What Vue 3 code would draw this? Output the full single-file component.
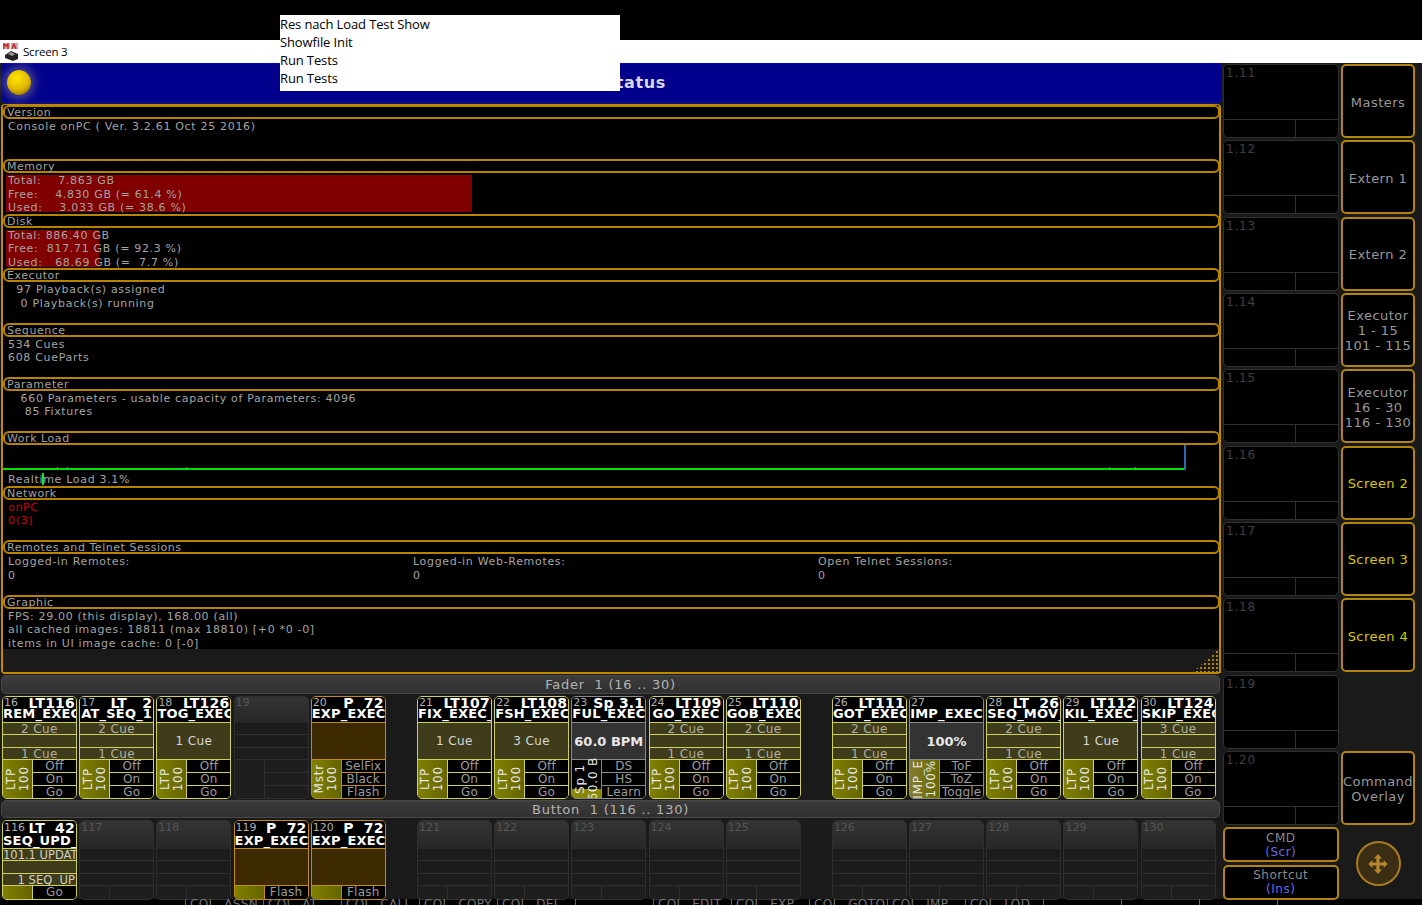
<template>
  <div class="screen">
    <div class="top"></div>
    <div class="titlebar">
      <svg class="appicon" width="18" height="18" viewBox="0 0 18 18">
        <rect x="1" y="0" width="7" height="6" fill="#d9a0a0" />
        <rect x="9" y="0" width="7" height="6" fill="#d9a0a0" />
        <path d="M2 6V1l2 2 2-2v5" fill="none" stroke="#c01818" stroke-width="1.2" />
        <path d="M10 6l2-5 2 5" fill="none" stroke="#c01818" stroke-width="1.2" />
        <path d="M3 12l6-4 7 3v5l-5 2-8-3z" fill="#222" />
        <path d="M6 11l3-2 4 2-3 2z" fill="#999" />
      </svg>
      <span>Screen 3</span>
    </div>

    <div class="desk">
      <div class="left">
        <div class="header">
          <div class="ball"></div>
          <div class="heading">System Status</div>
        </div>

        <div class="panel">
          <section v-for="s in sections" :key="s.title" class="section">
            <div class="pill">{{ s.title }}</div>
            <div class="body" :class="s.cls">
              <div v-if="s.bar" class="redbar"></div>
              <template v-if="s.cols">
                <div v-for="c in s.cols" :key="c" class="col">
                  <div>{{ c }}</div>
                  <div>0</div>
                </div>
              </template>
              <div v-for="l in s.lines" :key="l" class="line">{{ l }}</div>
              <template v-if="s.graph">
                <div class="graph"></div>
                <div class="graphend"></div>
                <div class="tick"></div>
                <div v-for="x in blips" :key="x" class="blip" :style="{ left: `${x}px` }"></div>
              </template>
            </div>
          </section>
          <div class="strip"></div>
          <div class="dots"></div>
        </div>

        <div class="bar">Fader&nbsp;&nbsp;1 (16 .. 30)</div>
        <div class="bank">
          <div v-for="(g, i) in faders" :key="i" class="group">
            <div v-for="c in g" :key="c.n" class="exec" :class="c.kind || 'empty'">
              <div class="head">
                <div class="headtop">
                  <span class="num">{{ c.n }}</span>
                  <span class="no">{{ c.no }}</span>
                </div>
                <div class="name">{{ c.name }}</div>
              </div>
              <div v-if="c.big" class="big">{{ c.big }}</div>
              <div v-else-if="c.one || c.flat" class="merged">{{ c.one }}</div>
              <div v-else class="rows">
                <div v-for="(r, j) in c.rows || ['', '', '']" :key="j" class="row">{{ r }}</div>
              </div>
              <div class="foot">
                <div class="fader" :class="{ speed: c.n === 23 }">
                  <span>{{ c.l1 }}</span><span>{{ c.l2 }}</span>
                </div>
                <div class="btns">
                  <div v-for="(b, j) in c.btns || ['', '', '']" :key="j" class="btn">{{ b }}</div>
                </div>
              </div>
            </div>
          </div>
        </div>

        <div class="bar second">Button&nbsp;&nbsp;1 (116 .. 130)</div>
        <div class="bank buttons">
          <div v-for="(g, i) in buttons" :key="i" class="group">
            <div v-for="c in g" :key="c.n" class="exec" :class="c.kind || 'empty'">
              <div class="head">
                <div class="headtop">
                  <span class="num">{{ c.n }}</span>
                  <span class="no">{{ c.no }}</span>
                </div>
                <div class="name">{{ c.name }}</div>
              </div>
              <div v-if="c.flat" class="merged"></div>
              <div v-else class="rows">
                <div v-for="(r, j) in c.rows || ['', '', '']" :key="j" class="row">{{ r }}</div>
              </div>
              <div class="foot">
                <div class="fader"></div>
                <div class="btns">
                  <div class="btn">{{ c.btn }}</div>
                </div>
              </div>
            </div>
          </div>
        </div>
      </div>

      <div class="views">
        <div v-for="v in views" :key="v" class="view">
          <div class="viewnum">{{ v }}</div>
          <div class="viewfoot"><i></i><i></i></div>
        </div>
        <div class="cmd">CMD<em>(Scr)</em></div>
        <div class="cmd">Shortcut<em>(Ins)</em></div>
      </div>

      <div class="side">
        <div v-for="b in sideBtns" :key="b.label" class="sidebtn" :class="{ on: b.on, blank: b.blank }">
          <span v-for="l in b.label.split('|')" :key="l">{{ l }}</span>
        </div>
        <div class="roundwrap">
          <div class="round">
            <svg width="22" height="22" viewBox="0 0 22 22">
              <path d="M11 1l4 4.500h-2.400v4h4V7l4 4-4 4v-2.500h-4v4H15L11 21l-4-4.500h2.400v-4h-4V15l-4-4 4-4v2.500h4v-4H7z" fill="#b8862a" />
            </svg>
          </div>
        </div>
      </div>
    </div>

    <div class="sliver">
      <span v-for="(t, i) in sliver" :key="i">{{ t }}</span>
    </div>

    <div class="popup">
      <div>Res nach Load Test Show</div>
      <div>Showfile Init</div>
      <div>Run Tests</div>
      <div>Run Tests</div>
    </div>
  </div>
</template>

<script setup>
const sections = [
  { title: 'Version', lines: ['Console onPC ( Ver. 3.2.61 Oct 25 2016)'] },
  { title: 'Memory', bar: true, cls: 'mem', lines: ['Total:    7.863 GB', 'Free:    4.830 GB (= 61.4 %)', 'Used:    3.033 GB (= 38.6 %)'] },
  { title: 'Disk', bar: true, cls: 'disk', lines: ['Total: 886.40 GB', 'Free:  817.71 GB (= 92.3 %)', 'Used:   68.69 GB (=  7.7 %)'] },
  { title: 'Executor', lines: ['  97 Playback(s) assigned', '   0 Playback(s) running'] },
  { title: 'Sequence', lines: ['534 Cues', '608 CueParts'] },
  { title: 'Parameter', lines: ['   660 Parameters - usable capacity of Parameters: 4096', '    85 Fixtures'] },
  { title: 'Work Load', graph: true, cls: 'load', lines: ['Realtime Load 3.1%'] },
  { title: 'Network', cls: 'net', lines: ['onPC', '0(3)'] },
  { title: 'Remotes and Telnet Sessions', cls: 'cols', cols: ['Logged-in Remotes:', 'Logged-in Web-Remotes:', 'Open Telnet Sessions:'] },
  { title: 'Graphic', lines: ['FPS: 29.00 (this display), 168.00 (all)', 'all cached images: 18811 (max 18810) [+0 *0 -0]', 'items in UI image cache: 0 [-0]'] }
]

const blips = [54, 64, 183, 1106, 1132]

const ltp = { kind: 'olive', l1: 'LTP', l2: '100', btns: ['Off', 'On', 'Go'] }
const twoRows = (a, b) => ({ ...ltp, rows: [a, '', b] })
const one = (t) => ({ ...ltp, one: t })

const faders = [
  [
    { n: 16, no: 'LT116', name: 'REM_EXEC', ...twoRows('2 Cue', '1 Cue') },
    { n: 17, no: 'LT   2', name: 'AT_SEQ_1', ...twoRows('2 Cue', '1 Cue') },
    { n: 18, no: 'LT126', name: 'TOG_EXEC', ...one('1 Cue') },
    { n: 19 },
    { n: 20, no: 'P  72', name: 'EXP_EXEC', kind: 'gold', flat: true, l1: 'Mstr', l2: '100', btns: ['SelFix', 'Black', 'Flash'] }
  ],
  [
    { n: 21, no: 'LT107', name: 'FIX_EXEC_', ...one('1 Cue') },
    { n: 22, no: 'LT108', name: 'FSH_EXEC', ...one('3 Cue') },
    { n: 23, no: 'Sp 3.1', name: 'FUL_EXEC', kind: 'grey', big: '60.0 BPM', l1: 'Sp 1', l2: '60.0 B', btns: ['DS', 'HS', 'Learn'] },
    { n: 24, no: 'LT109', name: 'GO_EXEC', ...twoRows('2 Cue', '1 Cue') },
    { n: 25, no: 'LT110', name: 'GOB_EXEC', ...twoRows('2 Cue', '1 Cue') }
  ],
  [
    { n: 26, no: 'LT111', name: 'GOT_EXEC', ...twoRows('2 Cue', '1 Cue') },
    { n: 27, no: '', name: 'IMP_EXEC', kind: 'grey imp', big: '100%', l1: 'IMP_E', l2: '100%', btns: ['ToF', 'ToZ', 'Toggle'] },
    { n: 28, no: 'LT  26', name: 'SEQ_MOV_', ...twoRows('2 Cue', '1 Cue') },
    { n: 29, no: 'LT112', name: 'KIL_EXEC_', ...one('1 Cue') },
    { n: 30, no: 'LT124', name: 'SKIP_EXEC', ...twoRows('3 Cue', '1 Cue') }
  ]
]

const buttons = [
  [
    { n: 116, no: 'LT  42', name: 'SEQ_UPD_', kind: 'olive', rows: ['101.1 UPDAT', '', '    1 SEQ  UP'], btn: 'Go' },
    { n: 117 },
    { n: 118 },
    { n: 119, no: 'P  72', name: 'EXP_EXEC', kind: 'gold', flat: true, btn: 'Flash' },
    { n: 120, no: 'P  72', name: 'EXP_EXEC', kind: 'gold', flat: true, btn: 'Flash' }
  ],
  [{ n: 121 }, { n: 122 }, { n: 123 }, { n: 124 }, { n: 125 }],
  [{ n: 126 }, { n: 127 }, { n: 128 }, { n: 129 }, { n: 130 }]
]

const views = ['1.11', '1.12', '1.13', '1.14', '1.15', '1.16', '1.17', '1.18', '1.19', '1.20']

const sideBtns = [
  { label: 'Masters' },
  { label: 'Extern 1' },
  { label: 'Extern 2' },
  { label: 'Executor|1 - 15|101 - 115' },
  { label: 'Executor|16 - 30|116 - 130' },
  { label: 'Screen 2', on: true },
  { label: 'Screen 3', on: true },
  { label: 'Screen 4', on: true },
  { label: ' ', blank: true },
  { label: 'Command|Overlay' }
]

const sliver = ['COL  ASSN', 'COL  AT', 'COL  CALL', 'COL  COPY', 'COL  DEL', '', 'COL  EDIT', 'COL  EXP', 'COL  GOTO', 'COL  IMP', 'COL  LOD', '', '', '', '']
</script>

<style>
body {
  background: #000;
}
</style>

<style scoped>
.screen {
  position: relative;
  width: 1422px;
  height: 905px;
  overflow: hidden;
  background: #000;
  font-family: "DejaVu Sans", sans-serif;
  font-size: 11px;
  color: #a4a4a4;
}
.top {
  height: 40px;
}
.titlebar {
  height: 23px;
  background: #fff;
  display: flex;
  align-items: center;
  color: #000;
  font-family: "Open Sans", sans-serif;
  font-size: 11.500px;
  letter-spacing: -0.2px;
}
.appicon {
  margin: 0 3px 0 2px;
}
.popup {
  position: absolute;
  left: 280px;
  top: 15px;
  width: 340px;
  height: 76px;
  background: #fff;
  color: #000;
  font-family: "Open Sans", sans-serif;
  font-size: 13px;
  letter-spacing: -0.12px;
  line-height: 18px;
  box-sizing: border-box;
}
.desk {
  display: flex;
  height: 836px;
  background: #1a1a1a;
}
.left {
  width: 1222px;
  flex: none;
}
.header {
  position: relative;
  height: 40px;
  margin-left: 1px;
  background: #00008c;
  border: 1px solid #0000d8;
  border-radius: 5px;
  box-sizing: border-box;
  display: flex;
  align-items: center;
  justify-content: center;
}
.ball {
  position: absolute;
  left: 5px;
  top: 6px;
  width: 24px;
  height: 25px;
  border-radius: 50%;
  background: radial-gradient(circle at 42% 32%, #ffe600 0, #e2b800 52%, #7a6200 96%);
  box-shadow: 0 0 10px 4px rgba(190, 180, 150, 0.4);
}
.heading {
  font-weight: bold;
  font-size: 16px;
  letter-spacing: 0.6px;
  color: #d8d8e8;
  margin: 0 30px 2px 0;
}
.panel {
  position: relative;
  height: 570px;
  margin: 1px 1px 0 1px;
  background: #000;
  border: 2px solid #c08a00;
  border-top-width: 1px;
  border-radius: 4px;
  box-sizing: border-box;
}
.section {
  height: 54.400px;
  display: flex;
  flex-direction: column;
}
.pill {
  flex: none;
  height: 14px;
  margin-right: -1px;
  padding-left: 2px;
  border: 2px solid #b88400;
  border-radius: 6px;
  box-sizing: border-box;
  line-height: 12px;
  letter-spacing: 0.55px;
  color: #a0a0a0;
}
.body {
  position: relative;
  flex: 1;
  padding: 1px 0 0 5px;
  white-space: pre;
  letter-spacing: 0.68px;
  line-height: 13.500px;
}
.line {
  position: relative;
}
.redbar {
  position: absolute;
  left: 3px;
  top: 2px;
  height: 37px;
  background: #800000;
}
.mem .redbar {
  width: 466px;
}
.disk .redbar {
  width: 93px;
}
.load .line {
  margin-top: 27px;
}
.graph {
  position: absolute;
  left: 0;
  top: 23px;
  width: 1182px;
  height: 2px;
  background: #00e000;
}
.graphend {
  position: absolute;
  left: 1181px;
  top: 0;
  width: 2px;
  height: 25px;
  background: #2a6cb0;
}
.tick {
  position: absolute;
  left: 39px;
  top: 28px;
  width: 2px;
  height: 12px;
  background: #19e619;
}
.blip {
  position: absolute;
  top: 22px;
  width: 1px;
  height: 1px;
  background: #10d010;
}
.net {
  color: #d00000;
}
.cols {
  display: grid;
  grid-template-columns: 405px 405px 1fr;
}
.strip {
  height: 23px;
  background: #1a1a1a;
}
.dots {
  position: absolute;
  right: -2px;
  bottom: -2px;
  width: 30px;
  height: 28px;
  background-image: radial-gradient(circle, #b88400 1.200px, transparent 1.500px);
  background-size: 4px 4px;
  clip-path: polygon(100% 0, 100% 100%, 0 100%);
}
.bar {
  height: 19px;
  margin: 1px 2px 0 1px;
  background: linear-gradient(#3c3c3c, #303030);
  border: 1px solid #484848;
  border-radius: 5px;
  box-sizing: border-box;
  text-align: center;
  line-height: 18px;
  font-size: 13px;
  letter-spacing: 0.75px;
  color: #b4b4b4;
}
.second {
  height: 18px;
  line-height: 17px;
  margin-top: 1px;
}
.bank {
  display: flex;
  gap: 31.200px;
  padding: 2px 0 0 2px;
}
.group {
  display: flex;
  gap: 2.200px;
}
.exec {
  width: 75px;
  height: 103px;
  display: flex;
  flex-direction: column;
  box-sizing: border-box;
  border: 1px solid;
  border-radius: 5px;
  overflow: hidden;
  --line: #d0d060;
  --fill: #3f3c1c;
  border-color: var(--line);
  background: var(--fill);
}
.gold {
  --line: #c48c10;
  --fill: #3c2900;
}
.grey {
  --line: #8a8a8a;
  --fill: #333;
}
.empty {
  --line: #2e2e2e;
  --fill: #1e1e1e;
}
.buttons .exec {
  height: 80px;
}
.head {
  height: 26px;
  flex: none;
  background: #000;
  border-bottom: 1px solid var(--line);
  box-sizing: border-box;
  color: #fff;
  overflow: hidden;
}
.buttons .head {
  height: 28px;
}
.empty .head {
  background: linear-gradient(#343434, #262626);
  border-bottom: 0;
}
.headtop {
  display: flex;
  justify-content: space-between;
  height: 11px;
  line-height: 12px;
  padding: 0 1px;
  white-space: pre;
}
.buttons .headtop {
  height: 13px;
  line-height: 14px;
}
.num {
  font-size: 11px;
  color: #b0b0b0;
}
.empty .num {
  color: #555;
}
.no {
  font-weight: bold;
  font-size: 14px;
  letter-spacing: 0.2px;
}
.name {
  font-weight: bold;
  font-size: 13px;
  line-height: 12px;
  letter-spacing: 0.2px;
  text-align: center;
  white-space: nowrap;
}
.buttons .name {
  line-height: 14px;
}
.big {
  height: 37px;
  flex: none;
  display: flex;
  align-items: center;
  justify-content: center;
  background: #333;
  border-bottom: 1px solid var(--line);
  box-sizing: border-box;
  color: #e8e8e8;
  font-weight: bold;
  font-size: 13px;
}
.merged {
  height: 37px;
  flex: none;
  display: flex;
  align-items: center;
  justify-content: center;
  border-bottom: 1px solid var(--line);
  box-sizing: border-box;
  color: #d8d8d8;
  font-size: 12px;
  letter-spacing: 0.4px;
}
.rows {
  height: 37px;
  flex: none;
  display: flex;
  flex-direction: column;
}
.row {
  flex: 1;
  text-align: center;
  font-size: 12px;
  line-height: 12px;
  border-bottom: 1px solid var(--line);
  white-space: pre;
  overflow: hidden;
  letter-spacing: 0.4px;
  color: #b0b0a0;
}
.buttons .olive .row {
  text-align: left;
  font-size: 11.500px;
  letter-spacing: 0;
  color: #d0d0c0;
}
.empty .row {
  background: #1c1c1c;
}
.foot {
  flex: 1;
  display: flex;
  min-height: 0;
}
.fader {
  width: 30px;
  flex: none;
  display: flex;
  align-items: center;
  justify-content: center;
  border-right: 1px solid var(--line);
  box-sizing: border-box;
  background: linear-gradient(90deg, #808000, #646400);
  color: #e8e8e8;
  font-size: 12px;
  line-height: 13px;
}
.fader span {
  writing-mode: vertical-rl;
  transform: rotate(180deg);
  letter-spacing: 0.8px;
  white-space: nowrap;
}
.empty .fader {
  background: none;
}
.grey .fader {
  background: linear-gradient(90deg, #807c30, #6a6800);
}
.grey .fader.speed {
  background: linear-gradient(0deg, #888800 9px, #000 9px);
}
.btns {
  flex: 1;
  display: flex;
  flex-direction: column;
  min-width: 0;
}
.btn {
  flex: 1;
  background: #000;
  border-bottom: 1px solid var(--line);
  text-align: center;
  font-size: 12px;
  line-height: 12px;
  letter-spacing: 0.2px;
  overflow: hidden;
  color: #9c9c9c;
}
.btn:last-child {
  border-bottom: 0;
}
.empty .btn {
  background: #1e1e1e;
}
.sliver {
  height: 6px;
  overflow: hidden;
  display: flex;
  padding-left: 185px;
  background: #000;
  line-height: 11px;
  white-space: pre;
  font-size: 12px;
  letter-spacing: 0.4px;
  color: #777;
}
.sliver span {
  width: 78px;
  flex: none;
  border-left: 1px solid #666;
  box-sizing: border-box;
  padding-left: 4px;
  overflow: hidden;
}
.views {
  width: 115.500px;
  flex: none;
  margin-left: 1px;
  padding-top: 1px;
  display: flex;
  flex-direction: column;
  gap: 2.330px;
}
.view {
  height: 74px;
  flex: none;
  background: #000;
  border: 1px solid #303030;
  border-radius: 5px;
  box-sizing: border-box;
  display: flex;
  flex-direction: column;
  justify-content: space-between;
}
.viewnum {
  padding: 1px 2px;
  letter-spacing: 0.8px;
  font-size: 12px;
  color: #404040;
}
.viewfoot {
  height: 17px;
  display: flex;
  border-top: 1px solid #303030;
}
.viewfoot i {
  flex: 1;
}
.viewfoot i:first-child {
  flex: none;
  width: 71px;
  border-right: 1px solid #303030;
}
.cmd {
  height: 35px;
  flex: none;
  background: #000;
  border: 2px solid #b48410;
  border-radius: 5px;
  box-sizing: border-box;
  display: flex;
  flex-direction: column;
  align-items: center;
  justify-content: center;
  font-size: 12px;
  letter-spacing: 0.5px;
  line-height: 14px;
  color: #8a8a8a;
}
.cmd em {
  font-style: normal;
  color: #6a6ae0;
}
.side {
  width: 74px;
  flex: none;
  margin-left: 2.500px;
  padding-top: 1px;
  display: flex;
  flex-direction: column;
  gap: 2.330px;
}
.sidebtn {
  height: 74px;
  flex: none;
  padding-top: 2px;
  background: #000;
  border: 2px solid #b48410;
  border-radius: 5px;
  box-sizing: border-box;
  display: flex;
  flex-direction: column;
  align-items: center;
  justify-content: center;
  line-height: 15px;
  font-size: 13px;
  letter-spacing: 0.45px;
  white-space: nowrap;
  color: #989898;
}
.sidebtn.on {
  color: #d8c800;
}
.sidebtn.blank {
  visibility: hidden;
}
.roundwrap {
  flex: 1;
  display: flex;
  justify-content: center;
  padding-top: 14px;
}
.round {
  width: 45px;
  height: 45px;
  border-radius: 50%;
  border: 2px solid #a87c20;
  background: #3c2e14;
  box-sizing: border-box;
  display: flex;
  align-items: center;
  justify-content: center;
}
</style>
